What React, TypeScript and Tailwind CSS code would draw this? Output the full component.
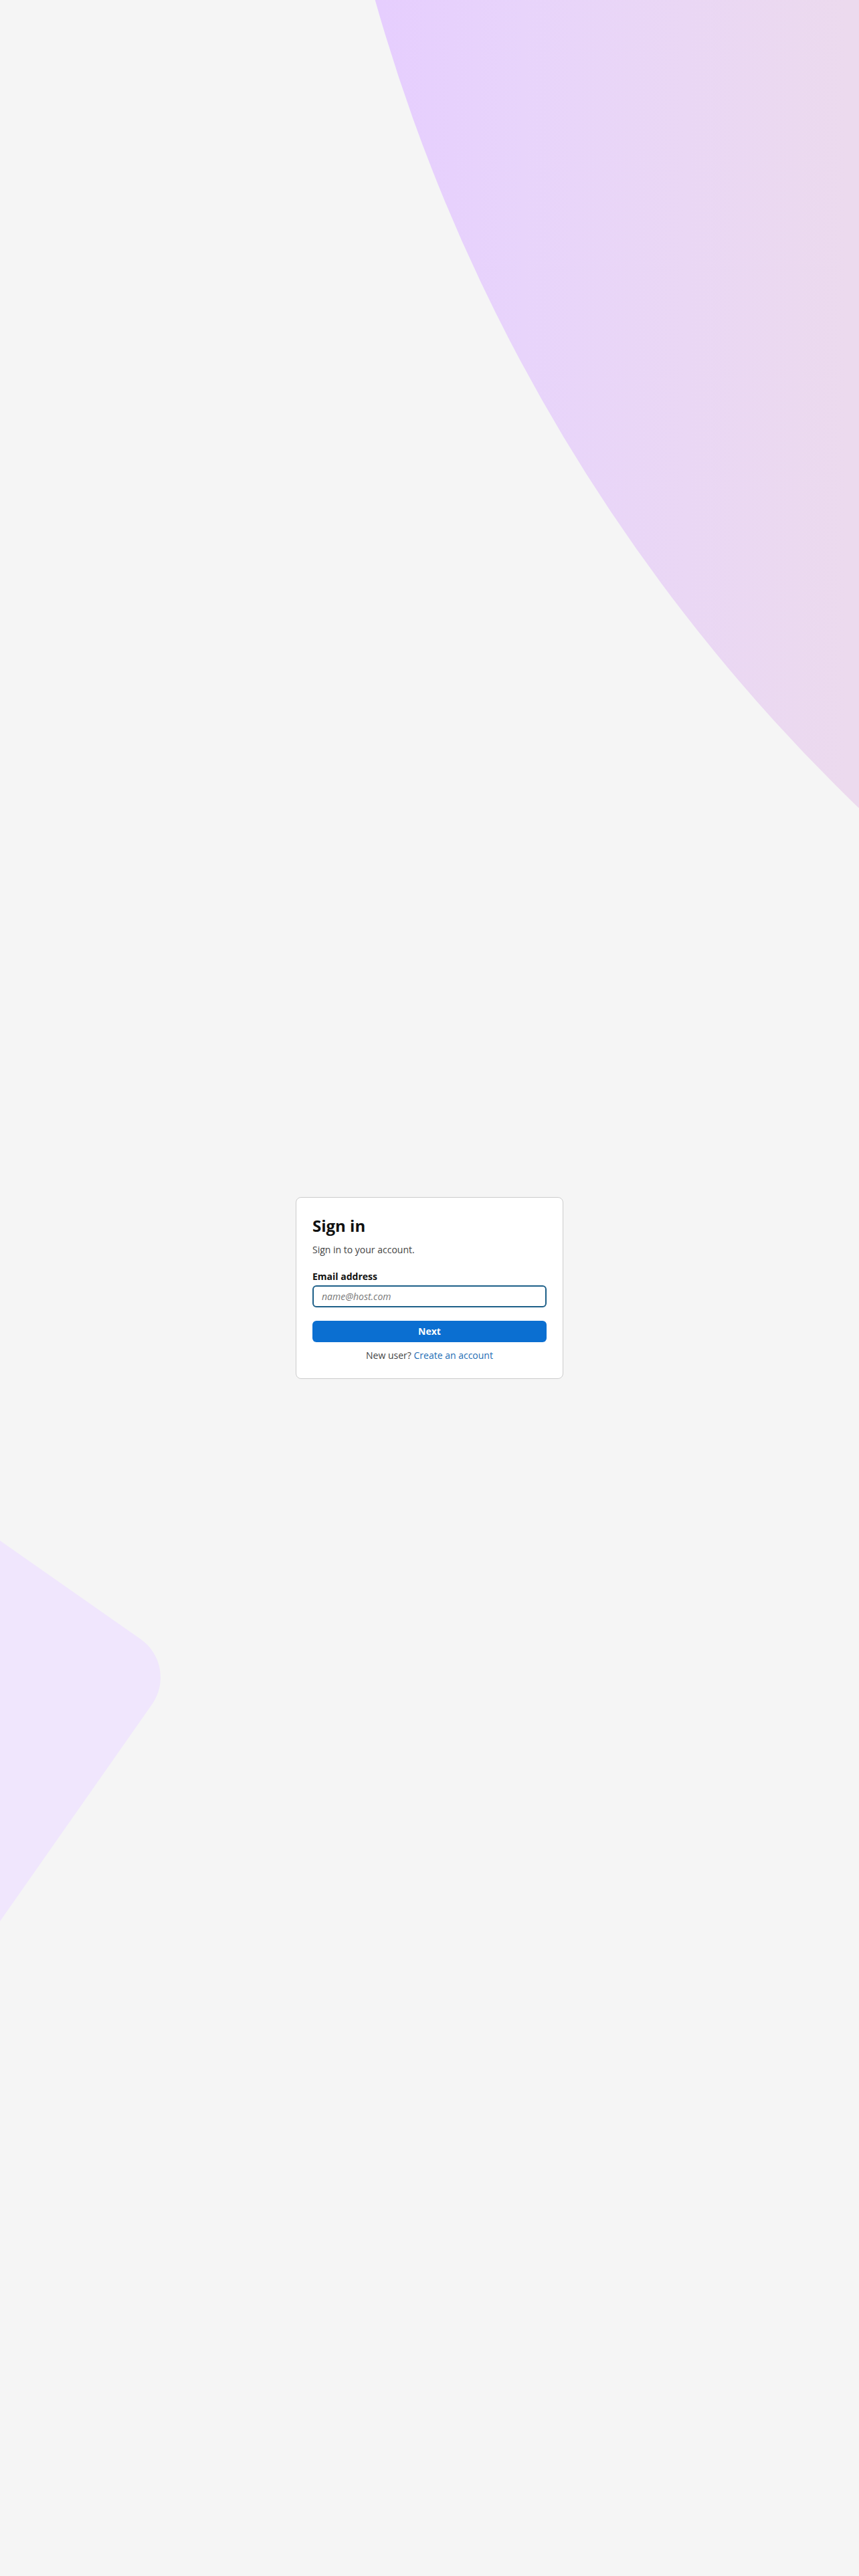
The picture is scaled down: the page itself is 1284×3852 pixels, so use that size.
import { useState } from 'react';

export default function App() {
  const [email, setEmail] = useState('');

  return (
    <div className="relative min-h-screen w-full overflow-hidden bg-[#f5f5f5] font-['Open_Sans',sans-serif] flex items-center justify-center">
      {/* Background shapes */}
      <div className="absolute left-[460px] top-[-3419px] w-[5380px] h-[5380px] rounded-full bg-[linear-gradient(90deg,#e6cefe_2%,#e8d4fb_6%,#ecdaee_15%)]" />
      <div className="absolute left-[-570px] top-[2227px] w-[700px] h-[700px] rounded-[70px] rotate-[35deg] bg-[#f0e6fd]" />

      {/* Sign in card */}
      <div className="relative z-10 w-[400px] bg-white border border-[#cccccc] rounded-lg px-6 pt-[26px] pb-[24px]">
        <h1 className="text-2xl leading-8 font-bold text-[#111111]">Sign in</h1>
        <p className="mt-[10px] text-sm leading-5 text-[#444444]">Sign in to your account.</p>

        <form className="mt-[20px]" onSubmit={(e) => e.preventDefault()}>
          <label htmlFor="email" className="block text-sm leading-5 font-bold text-[#111111]">
            Email address
          </label>
          <input
            id="email"
            type="email"
            value={email}
            onChange={(e) => setEmail(e.target.value)}
            placeholder="name@host.com"
            className="mt-[3px] block w-full h-[33px] px-3 rounded-md border-2 border-[#1d5f88] bg-white text-sm text-[#222222] outline-none placeholder:italic placeholder:text-[#777777]"
          />
          <button
            type="submit"
            className="mt-[20px] w-full h-[32px] rounded-md bg-[#0b6fd1] text-white text-sm font-bold"
          >
            Next
          </button>
        </form>

        <p className="mt-[10px] text-center text-sm leading-5 text-[#444444]">
          New user? <a href="#" className="text-[#1d6db5]">Create an account</a>
        </p>
      </div>
    </div>
  );
}
